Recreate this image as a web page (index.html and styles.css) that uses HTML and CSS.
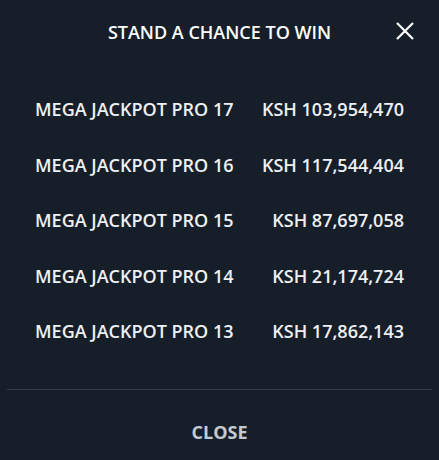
FILE: index.html
```html
<!DOCTYPE html>
<html>
<head>
<meta charset="utf-8">
<link rel="stylesheet" href="styles.css">
</head>
<body>
<div class="modal">
  <header class="head">
    <h1 class="title">STAND A CHANCE TO WIN</h1>
    <button class="x" aria-label="Close">
      <svg width="18" height="18" viewBox="0 0 18 18"><path d="M1 1L17 17M17 1L1 17" stroke="#fff" stroke-width="2.2" fill="none"/></svg>
    </button>
  </header>
  <ul class="list">
    <li class="row"><span>MEGA JACKPOT PRO 17</span><span>KSH 103,954,470</span></li>
    <li class="row"><span>MEGA JACKPOT PRO 16</span><span>KSH 117,544,404</span></li>
    <li class="row"><span>MEGA JACKPOT PRO 15</span><span>KSH 87,697,058</span></li>
    <li class="row"><span>MEGA JACKPOT PRO 14</span><span>KSH 21,174,724</span></li>
    <li class="row"><span>MEGA JACKPOT PRO 13</span><span>KSH 17,862,143</span></li>
  </ul>
  <div class="foot">
    <button class="close">CLOSE</button>
  </div>
</div>
</body>
</html>
```
FILE: styles.css
```css
html, body {
  margin: 0;
  padding: 0;
  background: #161e29;
}
body {
  font-family: "Open Sans", "Liberation Sans", sans-serif;
  color: #f2f4f6;
  width: 439px;
  height: 460px;
  overflow: hidden;
}
.modal {
  display: flex;
  flex-direction: column;
  height: 460px;
}
.head {
  position: relative;
  height: 64px;
  display: flex;
  align-items: center;
  justify-content: center;
}
.title {
  margin: 0;
  font-size: 18px;
  font-weight: 600;
  color: #ffffff;
}
.x {
  position: absolute;
  right: 25px;
  top: 22px;
  background: none;
  border: 0;
  padding: 0;
  width: 18px;
  height: 18px;
  cursor: pointer;
}
.x svg { display: block; }
.list {
  list-style: none;
  margin: 0;
  padding: 17.5px 35px 0;
}
.row {
  display: flex;
  justify-content: space-between;
  align-items: center;
  height: 55.5px;
  font-size: 18px;
  font-weight: 600;
  color: #eef0f3;
}
.foot {
  margin: 29.5px 7px 0;
  border-top: 1px solid #353d48;
  display: flex;
  justify-content: center;
}
.close {
  background: none;
  border: 0;
  font-family: inherit;
  font-size: 18px;
  font-weight: 700;
  color: #c5cad1;
  padding: 0;
  margin-top: 30px;
  line-height: 24px;
  cursor: pointer;
}
```
